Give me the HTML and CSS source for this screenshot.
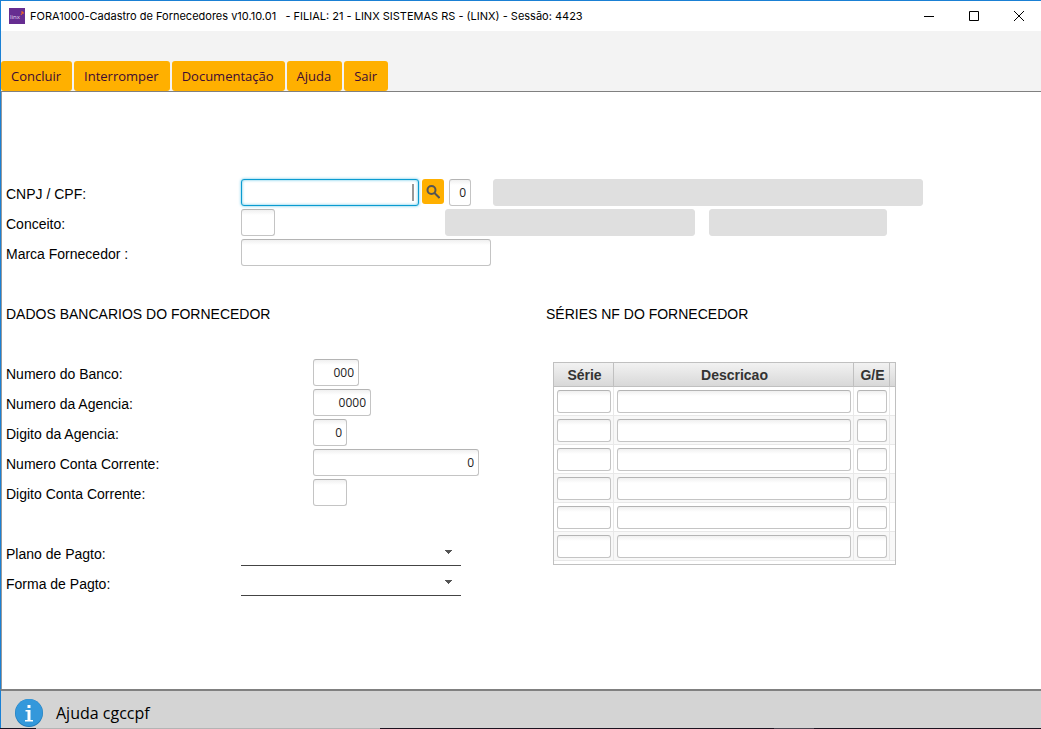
FILE: index.html
```html
<!DOCTYPE html>
<html lang="pt-BR">
<head>
    <meta charset="UTF-8">
    <meta name="viewport" content="width=device-width, initial-scale=1.0">
    <title>FORA1000-Cadastro de Fornecedores</title>
    <link rel="stylesheet" href="styles.css">
</head>
<body>
    <header class="titlebar">
        <svg class="logo" viewBox="0 0 16 16" aria-hidden="true">
            <rect width="16" height="16" fill="#662d91"/>
            <text x="1" y="11" font-family="Open Sans, sans-serif" font-size="6" fill="#e4d8ee">linx</text>
            <path d="M12 4h2v2M14 4l-2 3" stroke="#f26a21" stroke-width="1" fill="none"/>
        </svg>
        <h1 class="title">FORA1000-Cadastro de Fornecedores v10.10.01 &nbsp; - FILIAL: 21 - LINX SISTEMAS RS - (LINX) - Sessão: 4423</h1>
        <div class="window-buttons">
            <button type="button" aria-label="Minimizar"><svg viewBox="0 0 10 10"><path d="M0 5.500h10"/></svg></button>
            <button type="button" aria-label="Maximizar"><svg viewBox="0 0 10 10"><path d="M.5 .5h9v9h-9z"/></svg></button>
            <button type="button" aria-label="Fechar"><svg viewBox="0 0 10 10"><path d="M0 0l10 10M10 0L0 10"/></svg></button>
        </div>
    </header>

    <nav class="toolbar">
        <button type="button">Concluir</button>
        <button type="button">Interromper</button>
        <button type="button">Documentação</button>
        <button type="button">Ajuda</button>
        <button type="button">Sair</button>
    </nav>

    <main class="content">
        <div class="row">
            <label for="cnpj">CNPJ / CPF:</label>
            <input type="text" id="cnpj" class="field cnpj active">
            <button type="button" class="search" aria-label="Pesquisar">
                <svg viewBox="0 0 14 14"><circle cx="5.500" cy="5" r="4"/><path d="M8.500 8l5 5"/></svg>
            </button>
            <input type="text" class="field tiny" value="0" aria-label="Tipo">
            <input type="text" class="field readonly nome" readonly aria-label="Nome">
        </div>
        <div class="row">
            <label for="conceito">Conceito:</label>
            <input type="text" id="conceito" class="field small">
            <input type="text" class="field readonly descricao" readonly aria-label="Descrição do conceito">
            <input type="text" class="field readonly situacao" readonly aria-label="Situação">
        </div>
        <div class="row">
            <label for="marca">Marca Fornecedor :</label>
            <input type="text" id="marca" class="field large">
        </div>

        <div class="panels">
            <section class="bank">
                <h2>DADOS BANCARIOS DO FORNECEDOR</h2>
                <div class="row">
                    <label for="banco">Numero do Banco:</label>
                    <input type="text" id="banco" class="field banco" value="000">
                </div>
                <div class="row">
                    <label for="agencia">Numero da Agencia:</label>
                    <input type="text" id="agencia" class="field agencia" value="0000">
                </div>
                <div class="row">
                    <label for="digito-agencia">Digito da Agencia:</label>
                    <input type="text" id="digito-agencia" class="field small" value="0">
                </div>
                <div class="row">
                    <label for="conta">Numero Conta Corrente:</label>
                    <input type="text" id="conta" class="field conta" value="0">
                </div>
                <div class="row">
                    <label for="digito-conta">Digito Conta Corrente:</label>
                    <input type="text" id="digito-conta" class="field small">
                </div>
                <div class="payment">
                    <div class="row">
                        <label for="plano">Plano de Pagto:</label>
                        <select id="plano"><option></option></select>
                    </div>
                    <div class="row">
                        <label for="forma">Forma de Pagto:</label>
                        <select id="forma"><option></option></select>
                    </div>
                </div>
            </section>

            <section class="series">
                <h2>SÉRIES NF DO FORNECEDOR</h2>
                <table>
                    <colgroup><col class="col-serie"><col class="col-descricao"><col class="col-ge"><col></colgroup>
                    <thead>
                        <tr><th>Série</th><th>Descricao</th><th>G/E</th><th></th></tr>
                    </thead>
                    <tbody id="series"></tbody>
                </table>
            </section>
        </div>
    </main>

    <footer class="statusbar">
        <svg class="info" viewBox="0 0 28 28" aria-hidden="true">
            <circle cx="14" cy="14" r="14" fill="#217dbb"/>
            <circle cx="14" cy="13.500" r="13.500" fill="#3498db"/>
            <path d="M12.500 6h3v3h-3zM10.500 11h5v10h2.500v1.500h-8v-1.500h2.500v-8.500h-2z" fill="#fff"/>
        </svg>
        <span>Ajuda cgccpf</span>
    </footer>
    <div class="taskbar"></div>

    <script>
        const columns = ["Série", "Descricao", "G/E"];
        const body = document.getElementById("series");

        for (let i = 1; i <= 6; i++) {
            const tr = body.insertRow();
            columns.forEach(name => {
                const input = document.createElement("input");
                input.type = "text";
                input.className = "field";
                input.setAttribute("aria-label", `${name} ${i}`);
                tr.insertCell().appendChild(input);
            });
            tr.insertCell();
        }
    </script>
</body>
</html>
```
FILE: styles.css
```css
* {
    box-sizing: border-box;
}
body {
    margin: 0;
    min-height: 100vh;
    display: flex;
    flex-direction: column;
    border-top: 1px solid #1a80d4;
    font-family: "Liberation Sans", Arial, sans-serif;
    font-size: 14px;
    color: #000;
    background: #fff;
}
button, input, select {
    margin: 0;
    padding: 0;
    border: 0;
    font-family: "Open Sans", sans-serif;
}
.titlebar, .toolbar, .content, .statusbar {
    border-left: 1px solid #1a80d4;
}

/* title bar */
.titlebar {
    display: flex;
    align-items: center;
    height: 30px;
    padding-left: 8px;
}
.logo {
    width: 16px;
    height: 16px;
    margin-right: 5px;
}
.title {
    margin: 0;
    font: 11px Inter, sans-serif;
    white-space: nowrap;
}
.window-buttons {
    display: flex;
    margin-left: auto;
}
.window-buttons button {
    width: 45px;
    height: 30px;
    background: none;
}
.window-buttons svg {
    width: 10px;
    height: 10px;
    fill: none;
    stroke: #000;
}

/* toolbar */
.toolbar {
    display: flex;
    align-items: flex-end;
    gap: 2px;
    height: 61px;
    background: #f3f3f3;
    border-bottom: 1px solid #808080;
}
.toolbar button {
    height: 30px;
    padding: 0 11px 0 10px;
    border-radius: 3px;
    background: #ffb000;
    color: #3d0a35;
    font-size: 13px;
}

/* form */
.content {
    flex: 1;
    padding: 87px 5px 20px;
    box-shadow: inset 1px 0 #999;
}
.row {
    display: flex;
    align-items: flex-start;
    height: 30px;
}
.row label {
    width: 235px;
    line-height: 30px;
}
.bank .row label {
    width: 307px;
}
.bank .payment label {
    width: 235px;
}
.field {
    height: 27px;
    padding: 0 4px;
    border: 1px solid #c4c4c4;
    border-top-color: #b4b4b4;
    border-radius: 3px;
    background: linear-gradient(#f0f0f0, #fff 5px);
    color: #222;
    font-size: 12px;
    text-align: right;
}
.cnpj {
    width: 178px;
    margin-right: 3px;
}
.active {
    border-color: #0a9bd0;
    box-shadow: 0 0 3px #5cc4e6, inset 0 0 3px #5cc4e6;
    background: linear-gradient(#999, #999) right 4px center / 2px 17px no-repeat #fff;
}
.tiny {
    width: 22px;
    margin-right: 22px;
}
.small {
    width: 34px;
}
.large {
    width: 250px;
}
.banco {
    width: 46px;
}
.agencia {
    width: 58px;
}
.conta {
    width: 166px;
}
.readonly {
    border-color: #dfdfdf;
    background: #dfdfdf;
}
.nome {
    width: 430px;
}
.descricao {
    width: 250px;
    margin-left: 170px;
}
.situacao {
    width: 178px;
    margin-left: 14px;
}
.search {
    display: flex;
    align-items: center;
    justify-content: center;
    width: 22px;
    height: 25px;
    margin-right: 5px;
    border-radius: 3px;
    background: #ffb000;
}
.search svg {
    width: 14px;
    height: 14px;
    fill: none;
    stroke: #555;
    stroke-width: 2;
}

.panels {
    display: flex;
    margin-top: 30px;
}
.bank {
    width: 540px;
}
h2 {
    margin: 0 0 30px;
    font-size: 14px;
    font-weight: normal;
    line-height: 30px;
}
.payment {
    margin-top: 30px;
}
select {
    appearance: none;
    width: 220px;
    height: 27px;
    border-bottom: 1px solid #444;
    background:
        linear-gradient(to bottom right, #555 50%, transparent 50%) right 8px top 11px / 4px 4px no-repeat,
        linear-gradient(to bottom left, #555 50%, transparent 50%) right 12px top 11px / 4px 4px no-repeat;
}

/* series grid */
table {
    width: 343px;
    margin: 33px 0 0 7px;
    table-layout: fixed;
    border-collapse: separate;
    border-spacing: 0;
    border: 1px solid #c0c0c0;
    padding-bottom: 3px;
}
.series h2 {
    margin: 0;
}
.col-serie {
    width: 60px;
}
.col-descricao {
    width: 240px;
}
.col-ge {
    width: 36px;
}
th {
    height: 24px;
    padding: 0 0 0 2px;
    border-right: 1px solid #c0c0c0;
    border-bottom: 1px solid #c0c0c0;
    background: linear-gradient(#f2f2f2, #d8d8d8);
    color: #333;
    font-size: 14px;
}
td {
    height: 29px;
    padding: 3px 2px 2px 3px;
    border-right: 1px solid #e8e8e8;
    border-bottom: 1px solid #e8e8e8;
}
th:last-child, td:last-child {
    border-right: 0;
}
tbody tr:nth-child(even) {
    background: #f8f8f8;
}
td .field {
    display: block;
    width: 100%;
    height: 23px;
}

/* status bar */
.statusbar {
    display: flex;
    align-items: center;
    height: 39px;
    padding: 6px 14px 0;
    border-top: 2px solid #808080;
    background: #d4d4d4;
    font: 16px "Open Sans", sans-serif;
}
.info {
    width: 28px;
    height: 28px;
    margin-right: 13px;
}
.taskbar {
    height: 1px;
    background: linear-gradient(to right, #1b1320 36px, #b4b4b4 36px 380px, #1b1320 380px 705px, #1b1320 774px, #4a4450 774px 814px, #1b1320 814px);
}
```
